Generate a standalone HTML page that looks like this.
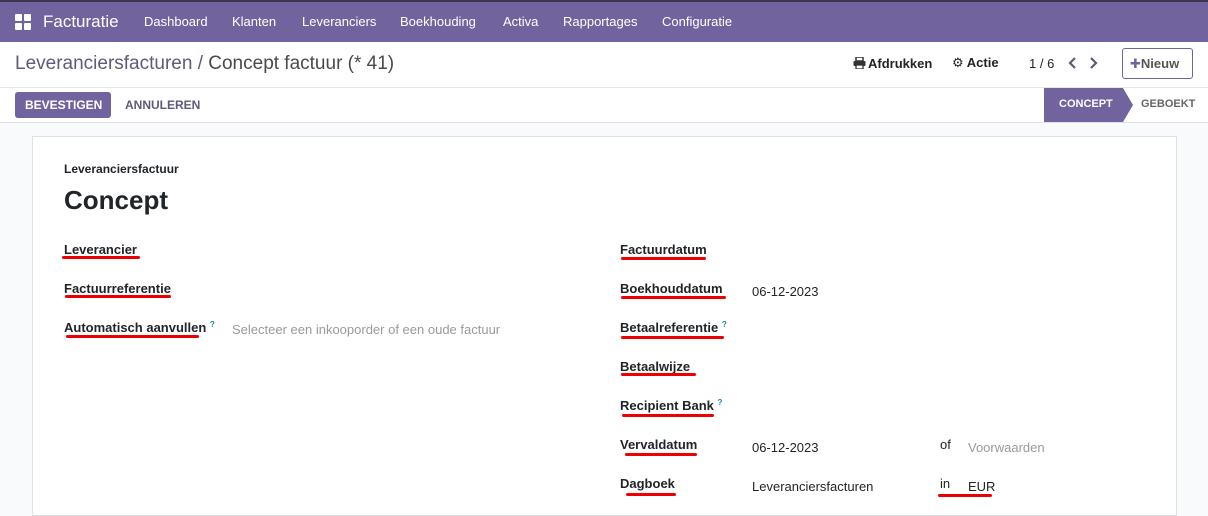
<!DOCTYPE html>
<html><head><meta charset="utf-8"><style>
*{margin:0;padding:0;box-sizing:border-box}
body{width:1208px;height:507px;overflow:hidden;background:#f9fafb;font-family:"Liberation Sans","DejaVu Sans",sans-serif;color:#212529;position:relative;font-size:13px}
.a{position:absolute;white-space:nowrap}
.nav{position:absolute;left:0;top:0;width:1208px;height:42px;background:#71639e;border-top:2px solid #3e3553}
.nav span{position:absolute;top:12px;color:#fff;font-size:13px}
.b{font-weight:bold;font-size:13px;color:#212529}
.r{position:absolute;height:3px;background:#e00;border-radius:2px}
.q{color:#0a8bb0;font-size:8px;vertical-align:top}
</style></head><body>
<div class="nav">
<svg class="a" style="left:15px;top:12px" width="16" height="16"><rect x="0" y="0" width="7" height="7" rx="1" fill="#fff"/><rect x="9" y="0" width="7" height="7" rx="1" fill="#fff"/><rect x="0" y="9" width="7" height="7" rx="1" fill="#fff"/><rect x="9" y="9" width="7" height="7" rx="1" fill="#fff"/></svg>
<span style="left:43px;top:10px;font-size:17px">Facturatie</span>
<span style="left:144px">Dashboard</span><span style="left:232px">Klanten</span><span style="left:302px">Leveranciers</span><span style="left:400px">Boekhouding</span><span style="left:503px">Activa</span><span style="left:563px">Rapportages</span><span style="left:662px">Configuratie</span>
</div>
<div class="a" style="left:0;top:42px;width:1208px;height:81px;background:#fff;border-bottom:1px solid #dee2e6"></div>
<div class="a" style="left:0;top:87px;width:1208px;height:1px;background:#e5e7ea"></div>
<div class="a" style="left:15px;top:53px;font-size:19px;color:#5f5a78">Leveranciersfacturen / <span style="color:#4a4a4a">Concept factuur (* 41)</span></div>
<svg class="a" style="left:853px;top:57px" width="13" height="12"><rect x="3" y="0" width="7" height="4" fill="none" stroke="#333" stroke-width="1.5"/><rect x="0.5" y="4" width="12" height="5" rx="1" fill="#333"/><rect x="3" y="8" width="7" height="4" fill="#fff" stroke="#333" stroke-width="1.3"/></svg>
<div class="a b" style="left:868px;top:56px">Afdrukken</div>
<div class="a b" style="left:952px;top:55px">&#9881; Actie</div>
<div class="a" style="left:1029px;top:56px">1 / 6</div>
<svg class="a" style="left:1068px;top:57px" width="32" height="12"><path d="M7 1 L2 6 L7 11" fill="none" stroke="#5f5a78" stroke-width="2.2"/><path d="M23 1 L28 6 L23 11" fill="none" stroke="#5f5a78" stroke-width="2.2"/></svg>
<div class="a b" style="left:1122px;top:48px;width:71px;height:31px;border:1px solid #71639e;border-radius:3px;padding:7px 0 0 7px;color:#555"><span style="color:#71639e">&#10010;</span>Nieuw</div>
<div class="a" style="left:15px;top:92px;width:96px;height:26px;background:#71639e;border-radius:3px;color:#fff;font-weight:bold;font-size:12px;padding:6px 0 0 10px">BEVESTIGEN</div>
<div class="a" style="left:125px;top:98px;color:#5f5a78;font-weight:bold;font-size:12px">ANNULEREN</div>
<svg class="a" style="left:1044px;top:88px" width="90" height="34"><polygon points="0,0 79,0 89,17 79,34 0,34" fill="#71639e"/></svg>
<div class="a" style="left:1059px;top:98px;color:#fff;font-weight:bold;font-size:11px">CONCEPT</div>
<div class="a" style="left:1141px;top:98px;color:#666;font-weight:bold;font-size:11px">GEBOEKT</div>
<div class="a" style="left:32px;top:136px;width:1145px;height:380px;background:#fff;border:1px solid #dee2e6"></div>
<div class="a b" style="left:64px;top:162px;font-size:12px">Leveranciersfactuur</div>
<div class="a" style="left:64px;top:185px;font-size:26px;font-weight:bold;color:#212529">Concept</div>
<div class="a b" style="left:64px;top:242px">Leverancier</div>
<div class="a b" style="left:64px;top:281px">Factuurreferentie</div>
<div class="a b" style="left:64px;top:320px">Automatisch aanvullen <span class="q">?</span></div>
<div class="a" style="left:232px;top:322px;color:#9a9a9a">Selecteer een inkooporder of een oude factuur</div>
<div class="a b" style="left:620px;top:242px">Factuurdatum</div>
<div class="a b" style="left:620px;top:281px">Boekhouddatum</div>
<div class="a" style="left:752px;top:284px">06-12-2023</div>
<div class="a b" style="left:620px;top:320px">Betaalreferentie <span class="q">?</span></div>
<div class="a b" style="left:620px;top:359px">Betaalwijze</div>
<div class="a b" style="left:620px;top:398px">Recipient Bank <span class="q">?</span></div>
<div class="a b" style="left:620px;top:437px">Vervaldatum</div>
<div class="a" style="left:752px;top:440px">06-12-2023</div>
<div class="a" style="left:940px;top:437px">of</div>
<div class="a" style="left:968px;top:440px;color:#9a9a9a">Voorwaarden</div>
<div class="a b" style="left:620px;top:476px">Dagboek</div>
<div class="a" style="left:752px;top:479px">Leveranciersfacturen</div>
<div class="a" style="left:940px;top:476px">in</div>
<div class="a" style="left:968px;top:479px">EUR</div>
<div class="r" style="left:62px;top:256px;width:78px"></div>
<div class="r" style="left:65px;top:295px;width:106px"></div>
<div class="r" style="left:66px;top:335px;width:133px"></div>
<div class="r" style="left:621px;top:257px;width:85px"></div>
<div class="r" style="left:621px;top:296px;width:105px"></div>
<div class="r" style="left:621px;top:336px;width:103px"></div>
<div class="r" style="left:621px;top:373px;width:75px"></div>
<div class="r" style="left:622px;top:414px;width:92px"></div>
<div class="r" style="left:625px;top:453px;width:72px"></div>
<div class="r" style="left:626px;top:493px;width:50px"></div>
<div class="r" style="left:938px;top:494px;width:54px"></div>
</body></html>
